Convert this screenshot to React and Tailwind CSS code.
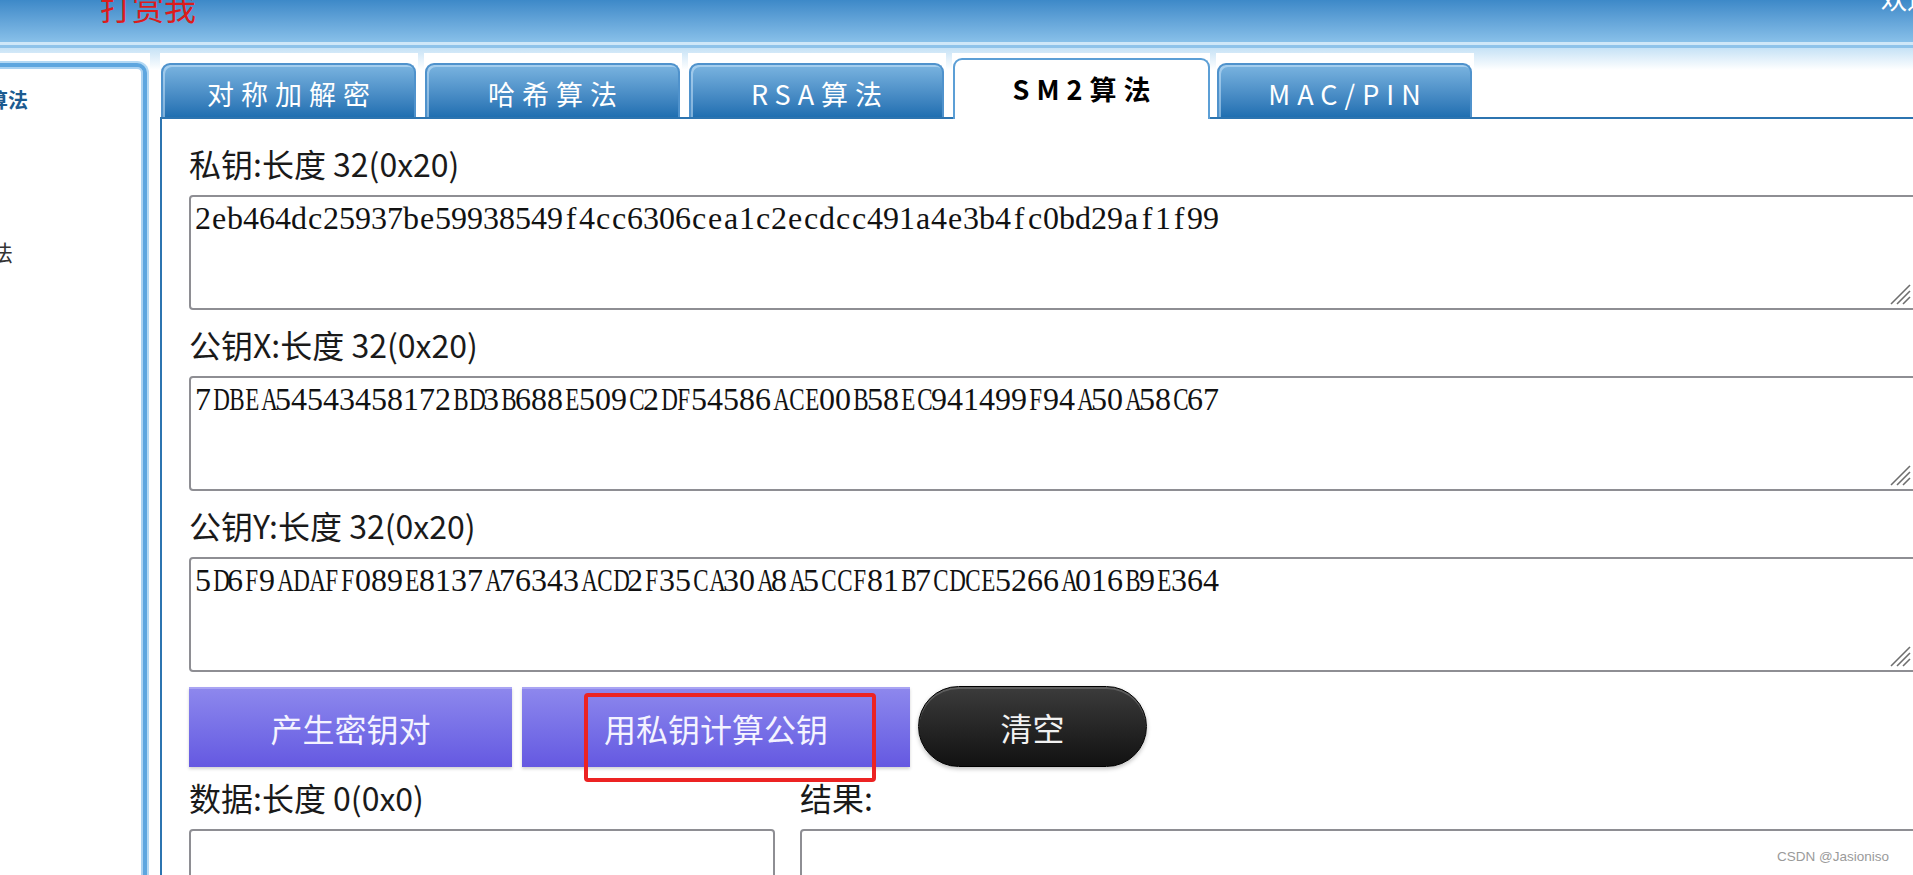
import React from "react";

const TABS = ["对称加解密", "哈希算法", "RSA算法", "SM2算法", "MAC/PIN"];
const ACTIVE = 3;

const FIELDS = [
  {
    label: "私钥:长度 32(0x20)",
    value: "2eb464dc25937be59938549f4cc6306cea1c2ecdcc491a4e3b4fc0bd29af1f99",
  },
  {
    label: "公钥X:长度 32(0x20)",
    value: "7DBEA54543458172BD3B688E509C2DF54586ACE00B58EC941499F94A50A58C67",
  },
  {
    label: "公钥Y:长度 32(0x20)",
    value: "5D6F9ADAFF089E8137A76343ACD2F35CA30A8A5CCF81B7CDCE5266A016B9E364",
  },
];

const Tab = ({ text, active }) => (
  <div className="flex h-[64px] w-[258px] shrink-0 items-end bg-white pl-[1px]">
    {active ? (
      <div className="relative z-10 -mb-[2px] flex h-[61px] w-[257px] items-center justify-center rounded-t-[9px] border-2 border-b-0 border-[#5c9fd6] bg-white pl-[7px] text-[27px] font-bold tracking-[7px] text-black">
        {text}
      </div>
    ) : (
      <div className="flex h-[54px] w-[255px] items-center justify-center rounded-t-[9px] border-2 border-b-0 border-[#4f92cc] bg-gradient-to-b from-[#7ab4e0] to-[#1f6fb1] pt-[6px] pl-[7px] text-[27px] tracking-[7px] text-white shadow-[inset_2px_2px_0_0_rgba(200,228,250,0.55)]">
        {text}
      </div>
    )}
  </div>
);

// fixed 16px cells, serif glyphs like the old NSimSun look
const Cell = ({ c }) => (
  <span
    className={
      /[A-Z]/.test(c)
        ? "inline-block w-[16px] shrink-0 scale-x-[0.72] text-center"
        : "inline-block w-[16px] shrink-0 text-center"
    }
  >
    {c}
  </span>
);

const Area = ({ value, className, grip = true }) => (
  <div
    className={`relative h-[115px] shrink-0 rounded-[4px] border-2 border-[#8e8e93] bg-white pl-[4px] pt-[3px] ${className}`}
  >
    <div className="flex whitespace-nowrap font-['Liberation_Serif',serif] text-[32px] leading-[36px] text-[#111]">
      {value.split("").map((c, i) => (
        <Cell key={i} c={c} />
      ))}
    </div>
    {grip && (
      <svg
        className="absolute bottom-[3px] right-[4px]"
        width="22"
        height="22"
        viewBox="0 0 22 22"
        stroke="#6e6e6e"
        strokeWidth="1.6"
      >
        <line x1="2" y1="21" x2="21" y2="2" />
        <line x1="8" y1="21" x2="21" y2="8" />
        <line x1="14" y1="21" x2="21" y2="14" />
      </svg>
    )}
  </div>
);

export default function App() {
  return (
    <div className="relative h-[875px] w-[1913px] overflow-hidden bg-white font-['Noto_Sans_CJK_SC','Noto_Sans',sans-serif] text-[#222]">
      {/* header */}
      <header className="flex h-[42px] items-start whitespace-nowrap bg-gradient-to-b from-[#3d89c8] to-[#88c0e9]">
        <span className="-mt-[10px] ml-[100px] text-[32px] leading-[32px] text-[#dc1c1c]">
          打赏我
        </span>
        <span className="-mr-[20px] -mt-[15px] ml-auto text-[26px] leading-[26px] text-white">
          欢迎
        </span>
      </header>
      <div className="h-[3px] bg-[#cfe7f8]" />
      <div className="h-[3px] bg-[#8fc3ea]" />

      <div className="flex bg-[linear-gradient(to_bottom,#c6e2f6_0px,#ffffff_22px)] pt-[5px]">
        {/* sidebar */}
        <aside className="h-[830px] w-[150px] shrink-0 bg-white pt-[10px]">
          <div className="-ml-[20px] h-full w-[167px] rounded-tr-[10px] border-4 border-[#5ea6df] bg-white shadow-[0_0_0_2px_#b4d9f4,inset_0_0_0_2px_#a9d2f2]">
            <div className="ml-[4px] mt-[21px] text-[20px] font-bold leading-[24px] text-[#1c5b90]">
              算法
            </div>
            <div className="-ml-[15px] mt-[126px] text-[22px] leading-[26px] text-[#333]">
              算法
            </div>
          </div>
        </aside>

        {/* main */}
        <div className="ml-[10px] min-w-0 flex-1">
          <div className="flex gap-[6px]">
            {TABS.map((t, i) => (
              <Tab key={t} text={t} active={i === ACTIVE} />
            ))}
          </div>

          <div className="h-[760px] border-l-2 border-t-2 border-[#2c74b0] bg-white pl-[27px] pt-[26px]">
            {FIELDS.map((f, i) => (
              <div key={f.label} className={i === 0 ? "" : "mt-[16px]"}>
                <div className="text-[32px] leading-[36px] text-[#1a1a1a]">{f.label}</div>
                <Area value={f.value} className="mt-[14px] w-[1728px]" />
              </div>
            ))}

            <div className="mt-[14px] flex items-center">
              <button className="h-[80px] w-[323px] border-t-2 border-[#a9a4f3] bg-gradient-to-b from-[#8d87ed] to-[#6558e1] text-[32px] text-[#f4f3ff] shadow-[0_2px_3px_rgba(0,0,0,0.18)]">
                产生密钥对
              </button>
              <button className="ml-[10px] h-[80px] w-[388px] border-t-2 border-[#a9a4f3] bg-gradient-to-b from-[#8d87ed] to-[#6558e1] text-[32px] text-[#f4f3ff] shadow-[0_2px_3px_rgba(0,0,0,0.18)]">
                用私钥计算公钥
              </button>
              <button className="ml-[8px] h-[81px] w-[229px] rounded-full border border-black bg-gradient-to-b from-[#3c3c3c] to-[#121212] text-[32px] text-[#f2f2f2] shadow-[inset_0_2px_0_rgba(255,255,255,0.18),0_2px_4px_rgba(0,0,0,0.25)]">
                清空
              </button>
            </div>

            <div className="mt-[12px] flex">
              <div className="w-[611px] shrink-0">
                <div className="text-[32px] leading-[36px] text-[#1a1a1a]">数据:长度 0(0x0)</div>
                <Area value="" grip={false} className="mt-[14px] w-[586px]" />
              </div>
              <div className="flex-1">
                <div className="text-[32px] leading-[36px] text-[#1a1a1a]">结果:</div>
                <Area value="" grip={false} className="mt-[14px] w-[1120px]" />
              </div>
            </div>
          </div>
        </div>
      </div>

      {/* annotation box */}
      <div className="absolute left-[584px] top-[693px] h-[89px] w-[292px] rounded-[4px] border-4 border-[#ec2323]" />

      {/* watermark */}
      <div className="absolute bottom-[8px] right-[24px] font-['Liberation_Sans',sans-serif] text-[13.5px] text-[#9a9a9a]">
        CSDN @Jasioniso
      </div>
    </div>
  );
}
